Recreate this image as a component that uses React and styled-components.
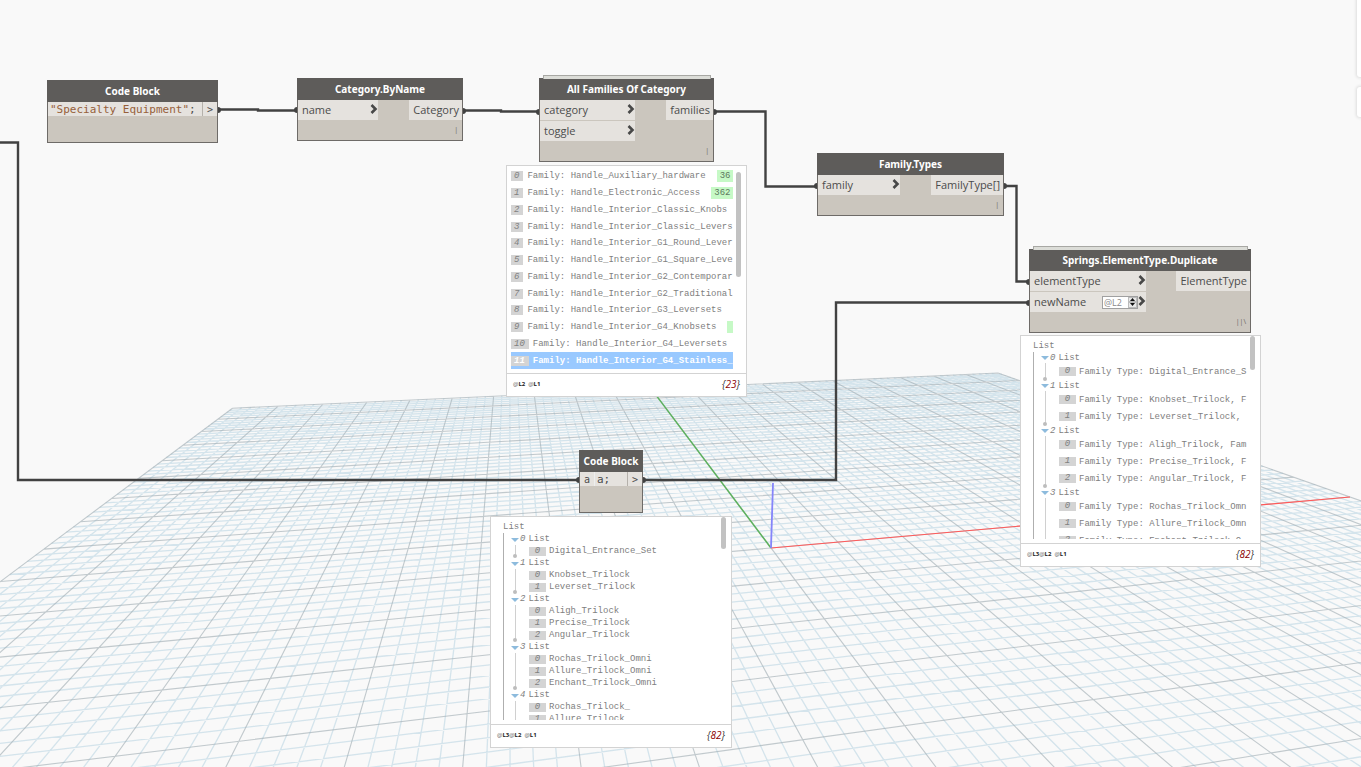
import React from 'react';
import styled, { createGlobalStyle, css } from 'styled-components';

const GlobalStyle = createGlobalStyle`
    * {
        box-sizing: border-box;
    }
    body {
        margin: 0;
        background-color: #F9F9F9;
        font-family: "Open Sans", sans-serif;
    }
`;

const colors = {
    dark: '#5E5C5A',
    body: '#CBC6BE',
    port: '#E5E2DE',
    text: '#4C4C4C',
    wire: '#424242',
    line: '#D3D3D3',
};

const mono = '"Liberation Mono", monospace';

const Workspace = styled.main`
    position: relative;
    width: 100%;
    min-height: 100vh;
    overflow: hidden;
`;

const Layer = styled.svg`
    position: absolute;
    top: 0;
    left: 0;
    width: 100%;
    height: 100%;
    pointer-events: none;
`;

const CornerPanel = styled.div`
    position: absolute;
    right: 0;
    top: ${props=> props.$top}px;
    width: 4px;
    height: ${props=> props.$height}px;
    background-color: #FFF;
    border-radius: 3px 0px 0px 3px;
    box-shadow: 0px 0px 3px 1px #DDD;
`;

const Placed = styled.div`
    position: absolute;
    left: ${props=> props.$x}px;
    top: ${props=> props.$y}px;
    width: ${props=> props.$width}px;
`;

const NodeBox = styled.section`
    position: relative;
    border: 1px solid #6E6B68;
    background-color: ${colors.body};
    color: ${colors.text};
    font-size: 11px;

    ${props=> props.$stacked && css`
        &::before {
            content: "";
            position: absolute;
            left: 3px;
            right: 2px;
            top: -4px;
            height: 3px;
            border: 1px solid #A8A8A4;
            border-bottom: 0;
            background-color: #DCDDD8;
        }
    `}
`;

const NodeTitle = styled.h2`
    margin: -1px -1px 0px;
    height: 22px;
    line-height: 23px;
    background-color: ${colors.dark};
    color: #FFF;
    font-family: "Noto Sans", sans-serif;
    font-size: 10px;
    font-weight: 700;
    text-align: center;
    white-space: nowrap;
`;

const Ports = styled.div`
    display: flex;
    justify-content: space-between;
    align-items: flex-start;
`;

const Inputs = styled.div`
    display: flex;
    flex-direction: column;
    gap: 1px;
    width: ${props=> props.$width}px;
`;

const Port = styled.div`
    display: flex;
    align-items: center;
    height: 20px;
    line-height: 20px;
    padding: 0px 3px 0px 4px;
    background-color: ${colors.port};
    white-space: nowrap;
`;

const InPort = styled(Port)`
    padding-right: 0px;
`;

const Chevron = styled.svg`
    width: 8px;
    height: 10px;
    margin-bottom: 2px;
    margin-left: ${props=> props.$tight ? '0px' : 'auto'};
`;

const NodeFooter = styled.div`
    height: 20px;
    padding: 2px 4px 0px;
    font-size: 7px;
    line-height: 16px;
    text-align: right;
    color: #66625E;
`;

const LevelPicker = styled.div`
    display: flex;
    margin-left: auto;
    width: 36px;
    height: 13px;
    border: 1px solid #A0A0A0;
`;

const LevelInput = styled.input`
    width: 25px;
    padding: 0px 0px 0px 1px;
    border: 0;
    background-color: #FFF;
    color: #8A8A8A;
    font-family: "Open Sans", sans-serif;
    font-size: 9px;
`;

const Spinner = styled.div`
    display: flex;
    flex-direction: column;
    flex: none;
    width: 9px;
`;

const SpinButton = styled.button`
    display: flex;
    align-items: center;
    justify-content: center;
    flex: 1;
    min-height: 0;
    padding: 0;
    border: 1px solid #BBB;
    background-color: #E9E9E9;
`;

const CodeRow = styled.div`
    display: flex;
    height: 14px;
    margin-bottom: 26px;
    background-color: ${colors.port};
    font-family: "DejaVu Sans Mono", monospace;
    font-size: 10px;
    line-height: 15px;
`;

const CodeInput = styled.span`
    width: 15px;
    padding-left: 4px;
    border-right: 1px solid #EEE;
`;

const Code = styled.code`
    flex: 1;
    padding-left: 2px;
    font-family: inherit;
    font-size: 11px;
    white-space: nowrap;
`;

const StringLiteral = styled.span`
    color: #96603A;
`;

const CodeOutput = styled.span`
    width: 15px;
    border-left: 1px solid #B5B1AB;
    text-align: center;
`;

const PreviewBox = styled.section`
    border: 1px solid ${colors.line};
    background-color: #FFF;
    color: #808080;
    font-family: ${mono};
    font-size: 9px;
`;

const PreviewBody = styled.div`
    position: relative;
    height: 207px;
    padding: 2px 13px 4px 4px;
`;

const Thumb = styled.div`
    position: absolute;
    top: ${props=> props.$top}px;
    right: 5px;
    width: 5px;
    height: ${props=> props.$height}px;
    border-radius: 3px;
    background-color: #C2C2C2;
`;

const PreviewFooter = styled.footer`
    display: flex;
    align-items: center;
    justify-content: space-between;
    height: 23px;
    padding: 0px 6px 3px;
    border-top: 1px solid ${colors.line};
    font-family: "Open Sans", sans-serif;
`;

const Levels = styled.div`
    display: flex;
    font-size: 6px;
    color: #666;
`;

const Level = styled.span`
    margin-right: ${props=> props.$gap ? '3px' : '0px'};

    b {
        color: #222;
    }
`;

const Count = styled.em`
    font-size: 10px;
    color: #333;

    span {
        color: #8B0000;
    }
`;

const FlatList = styled.ol`
    display: flex;
    flex-direction: column;
    height: 201px;
    margin: 0;
    padding: 0;
    list-style: none;
    overflow: hidden;
`;

const FlatItem = styled.li`
    display: flex;
    flex: 1;
    align-items: center;
    white-space: pre;

    ${props=> props.$selected && css`
        background-color: #99C9FF;
        color: #FFF;
        font-weight: 700;
    `}
`;

const Index = styled.i`
    flex: none;
    height: 10px;
    line-height: 10px;
    margin-right: 4px;
    padding: 0px 4px 0px 3px;
    background-color: #D4D4D4;
`;

const ElementId = styled.span`
    height: 12px;
    line-height: 12px;
    margin-left: 11px;
    padding: 0px 3px;
    background-color: #C6F9C6;
    color: #5F7A5F;
`;

const TreeBody = styled.div`
    height: 201px;
    margin-left: 8px;
    overflow: hidden;
`;

const TreeRoot = styled.div`
    height: 14px;
    line-height: 16px;
`;

const Branches = styled.ul`
    margin: 0;
    padding: 0px 0px 0px 7px;
    border-left: 1px solid #AFAFAF;
    list-style: none;
`;

const BranchTitle = styled.div`
    display: flex;
    align-items: center;
    gap: 1px;
    height: ${props=> props.$height}px;
    line-height: 12px;

    span {
        margin-left: 2px;
    }
`;

const Leaves = styled.ul`
    position: relative;
    margin: 0px 0px 0px 4px;
    padding: 0px 0px 0px 13px;
    border-left: 1px solid #D0D0D0;
    list-style: none;

    &::after {
        content: "";
        position: absolute;
        left: -3px;
        bottom: -1px;
        width: 4px;
        height: 4px;
        border-radius: 50%;
        background-color: #BDBDBD;
    }
`;

const Leaf = styled.li`
    display: flex;
    align-items: center;
    height: ${props=> props.$height}px;
    white-space: pre;
`;

const LeafIndex = styled.i`
    flex: none;
    width: 17px;
    height: 9px;
    line-height: 9px;
    margin-right: 3px;
    background-color: #D4D4D4;
    text-align: center;
`;

// ground plane (u, v) in major grid units, origin at the axes
const project = (u, v)=> {
    const w = 1 + 0.017388 * u + 0.08465 * v;
    const x = (771 + 81.374 * u + 43.16 * v) / w;
    const y = (548 + 3.542 * u + 17.018 * v) / w;
    return `${x.toFixed(1)} ${y.toFixed(1)}`;
};

const NEAR = -7;

const gridPath = (major)=> {
    let d = '';
    for (let i = -50; i <= 50; i++) {
        if ((i % 5 === 0) !== major) continue;
        const k = i / 5;
        d += `M${project(k, NEAR)}L${project(k, 10)}`;
        if (k >= NEAR) d += `M${project(-10, k)}L${project(10, k)}`;
    }
    return d;
};

const Ground = ()=> (
    <Layer aria-hidden="true">
        <g fill="none">
            <path d={gridPath(false)} stroke="#B9D4E2" strokeWidth="1.3" strokeOpacity=".58" />
            <path d={gridPath(true)} stroke="#A3AFB6" strokeWidth="1.1" strokeOpacity=".65" />
            <path d={`M${project(0, 0)}L${project(0, 10)}`} stroke="#5DB15D" strokeWidth="1.5" />
            <path d={`M${project(0, 0)}L${project(10, 0)}`} stroke="#FF5A5A" strokeWidth="1.2" />
            <path d="M771 548L773 483" stroke="#8585FA" strokeWidth="1.8" />
        </g>
    </Layer>
);

const wires = [
    'M218 109.5H258V110.5H297',
    'M463 110.5H501V111.5H539',
    'M714 111.5H765.5V186.5H817',
    'M1004 186H1016.5V281.5H1029',
    'M0 142.5H18V480H579',
    'M643 480H836V302.5H1029',
];

const pins = [
    [218, 110], [297, 110], [463, 111], [539, 112], [714, 112], [817, 186],
    [1004, 186], [1029, 282], [1029, 303], [579, 480], [643, 480],
];

const Wires = ()=> (
    <Layer aria-hidden="true">
        {wires.map((d)=> <path key={d} d={d} fill="none" stroke={colors.wire} strokeWidth="2.4" />)}
        {pins.map(([x, y])=> <circle key={`${x}-${y}`} cx={x} cy={y} r="3" fill={colors.wire} />)}
    </Layer>
);

const LevelSelect = ()=> (
    <LevelPicker>
        <LevelInput aria-label="List level" defaultValue="@L2" />
        <Spinner>
            <SpinButton aria-label="Level up">
                <svg width="5" height="3" viewBox="0 0 5 3"><path d="M0 3L2.5 0L5 3Z" fill="#111" /></svg>
            </SpinButton>
            <SpinButton aria-label="Level down">
                <svg width="5" height="3" viewBox="0 0 5 3"><path d="M0 0L2.5 3L5 0Z" fill="#111" /></svg>
            </SpinButton>
        </Spinner>
    </LevelPicker>
);

const GraphNode = ({ x, y, width, title, inputs, inputWidth, output, lacing, stacked })=> (
    <Placed $x={x} $y={y} $width={width}>
        <NodeBox $stacked={stacked}>
            <NodeTitle>{title}</NodeTitle>
            <Ports>
                <Inputs $width={inputWidth}>
                    {inputs.map(({ name, level })=> (
                        <InPort key={name}>
                            {name}
                            {level && <LevelSelect />}
                            <Chevron $tight={level} viewBox="0 0 8 10">
                                <path d="M1.5 1L5.5 5L1.5 9" fill="none" stroke="#484848" strokeWidth="2.6" />
                            </Chevron>
                        </InPort>
                    ))}
                </Inputs>
                <Port>{output}</Port>
            </Ports>
            <NodeFooter>{lacing}</NodeFooter>
        </NodeBox>
    </Placed>
);

const CodeBlock = ({ x, y, width, input, children })=> (
    <Placed $x={x} $y={y} $width={width}>
        <NodeBox>
            <NodeTitle>Code Block</NodeTitle>
            <CodeRow>
                {input && <CodeInput>{input}</CodeInput>}
                <Code>{children}</Code>
                <CodeOutput>&gt;</CodeOutput>
            </CodeRow>
        </NodeBox>
    </Placed>
);

const Preview = ({ x, y, width, thumb, levels, count, children })=> (
    <Placed $x={x} $y={y} $width={width}>
        <PreviewBox>
            <PreviewBody>
                {children}
                <Thumb $top={thumb[0]} $height={thumb[1]} />
            </PreviewBody>
            <PreviewFooter>
                <Levels>
                    {levels.map((level)=> (
                        <Level key={level} $gap={level === 'L2'}>@<b>{level}</b></Level>
                    ))}
                </Levels>
                <Count>{'{'}<span>{count}</span>{'}'}</Count>
            </PreviewFooter>
        </PreviewBox>
    </Placed>
);

const Tree = ({ branches, titleHeight, leafHeight })=> (
    <TreeBody>
        <TreeRoot>List</TreeRoot>
        <Branches>
            {branches.map((leaves, i)=> (
                <li key={i}>
                    <BranchTitle $height={titleHeight}>
                        <svg width="8" height="5" viewBox="0 0 8 5"><path d="M0 1H8L4 5Z" fill="#8DBBDD" /></svg>
                        <i>{i}</i>
                        <span>List</span>
                    </BranchTitle>
                    <Leaves>
                        {leaves.map((leaf, j)=> (
                            <Leaf key={leaf} $height={leafHeight}>
                                <LeafIndex>{j}</LeafIndex>
                                {leaf}
                            </Leaf>
                        ))}
                    </Leaves>
                </li>
            ))}
        </Branches>
    </TreeBody>
);

const families = [
    { name: 'Handle_Auxiliary_hardware', id: '36' },
    { name: 'Handle_Electronic_Access', id: '362' },
    { name: 'Handle_Interior_Classic_Knobs' },
    { name: 'Handle_Interior_Classic_Levers' },
    { name: 'Handle_Interior_G1_Round_Lever' },
    { name: 'Handle_Interior_G1_Square_Leve' },
    { name: 'Handle_Interior_G2_Contemporar' },
    { name: 'Handle_Interior_G2_Traditional' },
    { name: 'Handle_Interior_G3_Leversets' },
    { name: 'Handle_Interior_G4_Knobsets', id: ' ' },
    { name: 'Handle_Interior_G4_Leversets' },
    { name: 'Handle_Interior_G4_Stainless_', selected: true },
];

const familyTypes = [
    ['Family Type: Digital_Entrance_S'],
    ['Family Type: Knobset_Trilock, F', 'Family Type: Leverset_Trilock,'],
    ['Family Type: Aligh_Trilock, Fam', 'Family Type: Precise_Trilock, F', 'Family Type: Angular_Trilock, F'],
    ['Family Type: Rochas_Trilock_Omn', 'Family Type: Allure_Trilock_Omn', 'Family Type: Enchant_Trilock_O'],
];

const names = [
    ['Digital_Entrance_Set'],
    ['Knobset_Trilock', 'Leverset_Trilock'],
    ['Aligh_Trilock', 'Precise_Trilock', 'Angular_Trilock'],
    ['Rochas_Trilock_Omni', 'Allure_Trilock_Omni', 'Enchant_Trilock_Omni'],
    ['Rochas_Trilock_', 'Allure_Trilock_'],
];

export default ()=> (
    <Workspace>
        <GlobalStyle />
        <Ground />
        <CornerPanel $top={-4} $height={81} />
        <CornerPanel $top={87} $height={30} />
        <Wires />

        <CodeBlock x={47} y={80} width={171}>
            <StringLiteral>"Specialty Equipment"</StringLiteral>;
        </CodeBlock>
        <GraphNode
            x={297} y={78} width={166} title="Category.ByName"
            inputs={[{ name: 'name' }]} inputWidth={80} output="Category" lacing="|"
        />
        <GraphNode
            x={539} y={78} width={175} title="All Families Of Category" stacked
            inputs={[{ name: 'category' }, { name: 'toggle' }]} inputWidth={95} output="families" lacing="|"
        />
        <GraphNode
            x={817} y={153} width={187} title="Family.Types"
            inputs={[{ name: 'family' }]} inputWidth={82} output="FamilyType[]" lacing="|"
        />
        <GraphNode
            x={1029} y={249} width={222} title="Springs.ElementType.Duplicate" stacked
            inputs={[{ name: 'elementType' }, { name: 'newName', level: true }]} inputWidth={116}
            output="ElementType" lacing="||\"
        />
        <CodeBlock x={579} y={450} width={64} input="a">a;</CodeBlock>

        <Preview x={506} y={165} width={241} thumb={[6, 105]} levels={['L2', 'L1']} count={23}>
            <FlatList>
                {families.map(({ name, id, selected }, i)=> (
                    <FlatItem key={name} $selected={selected}>
                        <Index>{i}</Index>
                        Family: {name}
                        {id && <ElementId>{id}</ElementId>}
                    </FlatItem>
                ))}
            </FlatList>
        </Preview>
        <Preview x={1020} y={335} width={241} thumb={[0, 34]} levels={['L3', 'L2', 'L1']} count={82}>
            <Tree branches={familyTypes} titleHeight={11} leafHeight={17} />
        </Preview>
        <Preview x={490} y={516} width={242} thumb={[0, 32]} levels={['L3', 'L2', 'L1']} count={82}>
            <Tree branches={names} titleHeight={12} leafHeight={12} />
        </Preview>
    </Workspace>
);
